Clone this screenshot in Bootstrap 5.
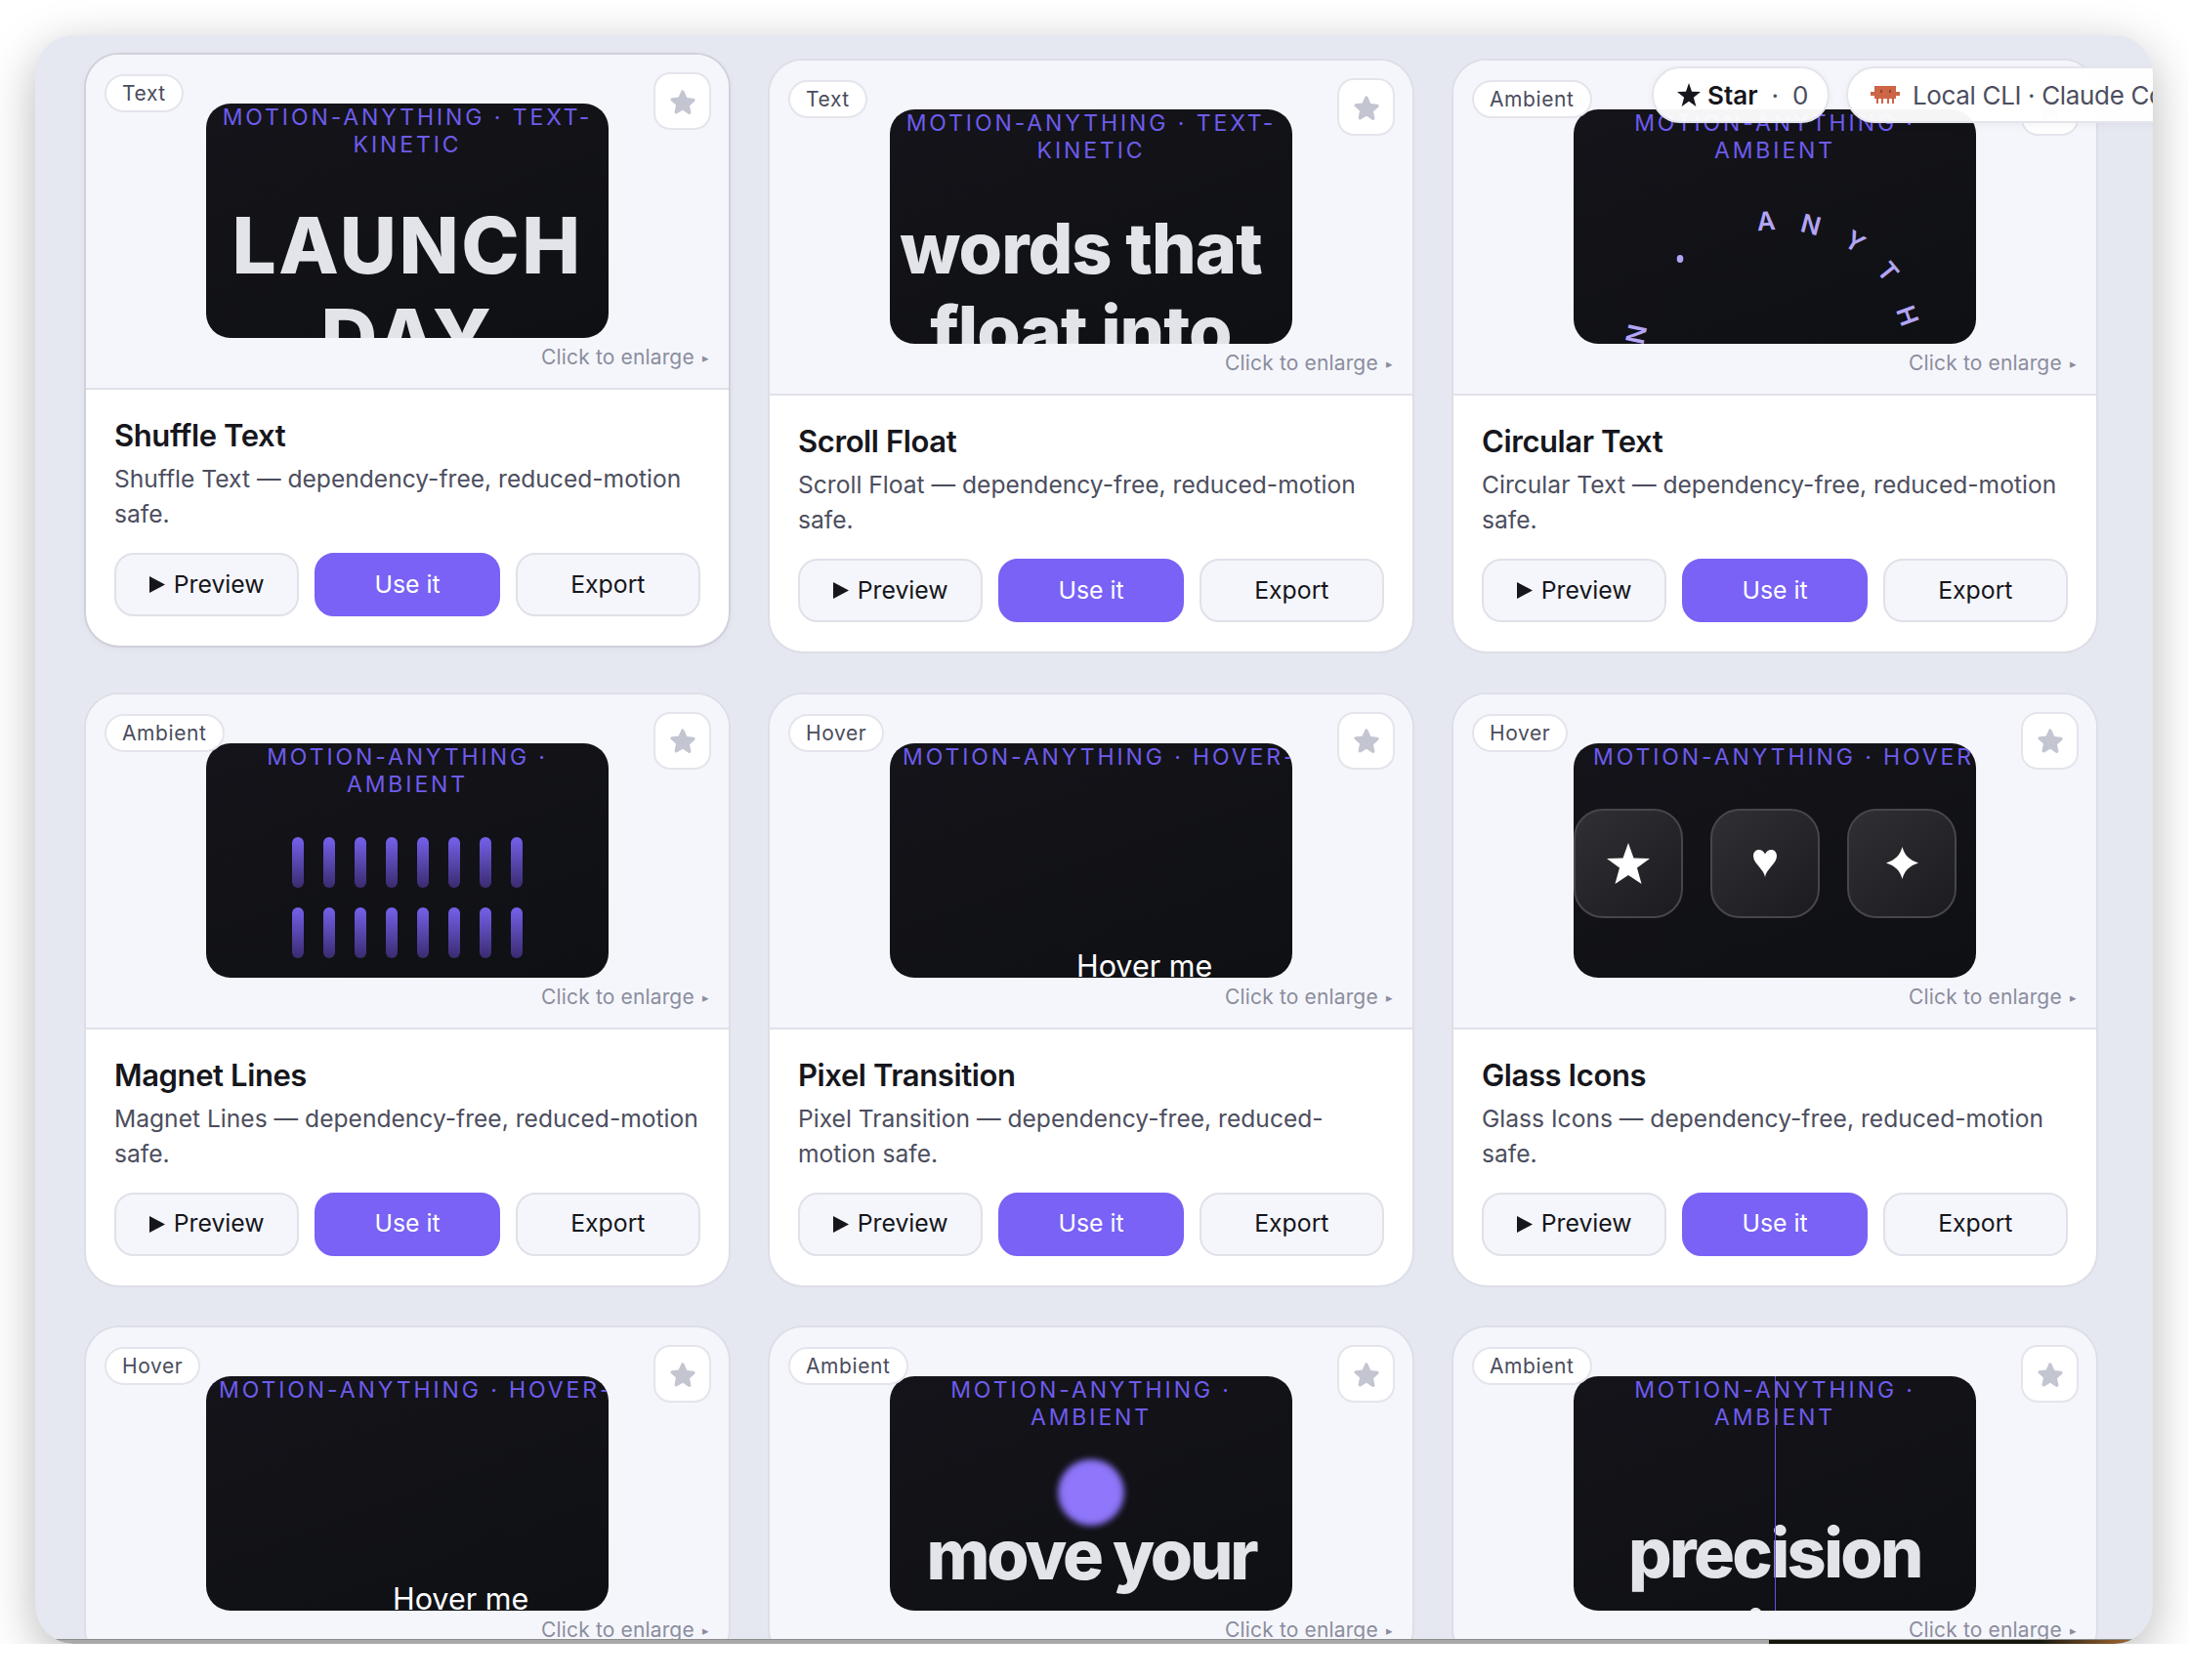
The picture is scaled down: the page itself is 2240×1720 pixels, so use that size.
<!DOCTYPE html>
<html lang="en">
  <head>
    <meta charset="UTF-8" />
    <meta name="viewport" content="width=device-width, initial-scale=1.0" />
    <title>Motion Anything</title>
    <link
      rel="stylesheet"
      href="https://cdn.jsdelivr.net/npm/bootstrap@5.3.3/dist/css/bootstrap.min.css"
    />
    <style>
      body { background: #fff; font-family: Inter, "Liberation Sans", sans-serif; }
      .app-window { position: relative; width: 2168px; height: 1647px; margin: 36px 0 0 36px; background: #e6e8f1; border-radius: 40px; overflow: hidden; box-shadow: 0 14px 50px rgba(0, 0, 0, .28); }
      .effect-grid { display: grid; grid-template-columns: repeat(3, 662px); gap: 39.500px 38px; padding: 24px 0 0 50px; }
      .effect-card { position: relative; border: 2px solid #dddee7; border-radius: 36px; background: #fff; overflow: hidden; }
      .effect-card.is-hovered { transform: translateY(-6px); border-color: #cfd0da; box-shadow: 0 2px 6px rgba(40, 40, 70, .04); }
      .effect-top { background: #f5f6fb; border-bottom: 2px solid #e0e1e9; padding: 50px 0 17px; }
      .kind-tag { position: absolute; top: 20px; left: 19px; z-index: 2; padding: 0 16px; line-height: 35px; font-size: 21px; letter-spacing: .6px; color: #4a4c5c; background: #fff; border: 2px solid #e4e5ec; border-radius: 20px; }
      .fav-btn { position: absolute; top: 18px; right: 18px; z-index: 2; width: 59px; height: 59px; padding: 0; display: flex; align-items: center; justify-content: center; background: #fff; border: 2px solid #e4e5ec; border-radius: 17px; }
      .fav-btn svg { width: 28px; height: 28px; fill: #c3c5d1; }
      .stage { position: relative; width: 412px; height: 240px; margin: 0 auto; border-radius: 25px; overflow: hidden; background: linear-gradient(160deg, #14141a, #0f1014); }
      .eyebrow { font-size: 23px; line-height: 28px; letter-spacing: 2.900px; color: #6e5cec; text-align: center; padding: 0 4px; }
      .eyebrow-line { white-space: nowrap; text-align: left; padding: 0 0 0 13px; }
      .eyebrow-glass { padding-left: 20px; }
      .big-text { color: #e3e4ea; font-weight: 800; text-align: center; white-space: nowrap; }
      .launch-text { margin-top: 42px; font-size: 80px; line-height: 94px; letter-spacing: 2.500px; }
      .float-text { margin-top: 43px; padding-right: 21px; font-size: 72px; line-height: 85px; letter-spacing: -1px; }
      .ambient-text { margin-top: -13px; font-size: 70px; line-height: 85px; letter-spacing: -2.600px; }
      .move-text { letter-spacing: -3.200px; }
      .precision-text { margin-top: 82px; }
      .circle-svg { position: absolute; inset: 0; }
      .circle-svg text { font: 600 26px Inter, sans-serif; fill: #b3a5f5; text-anchor: middle; dominant-baseline: central; }
      .circle-svg ellipse { fill: #b3a5f5; }
      .magnet-grid { display: grid; grid-template-columns: repeat(8, 12px); grid-auto-rows: 52px; gap: 20px; justify-content: center; margin-top: 40px; }
      .magnet-bar { border-radius: 6px; background: linear-gradient(#7561eb, #3a2b6f); }
      .hover-label { position: absolute; left: 191px; top: 208px; font-size: 30.500px; line-height: 40px; color: #fff; }
      .glass-row { display: flex; gap: 28px; margin-top: 39px; }
      .glass-tile { width: 112px; height: 112px; display: flex; align-items: center; justify-content: center; border: 2px solid #47474b; border-radius: 30px; background: linear-gradient(140deg, #303034, #1c1c20); }
      .glass-tile svg { fill: #fff; }
      .orb { width: 68px; height: 68px; margin: 29px auto 0; border-radius: 50%; background: radial-gradient(circle, #8f76fa 55%, #7a62ea); filter: blur(3px); }
      .scan-line { position: absolute; left: 206px; top: 0; width: 1px; height: 100%; background: #6553dc; }
      .effect-hint { margin-top: 6px; padding-right: 20px; text-align: right; font-size: 21px; line-height: 28px; letter-spacing: .15px; color: #8b8d9e; }
      .effect-hint span { font-size: 13px; vertical-align: 2px; margin-left: 2px; }
      .effect-body { padding: 27px 29px 30px; }
      .effect-title { margin: 0 0 6px; font-size: 31px; line-height: 40px; font-weight: 600; color: #16161c; letter-spacing: -.4px; }
      .effect-text { margin: 0 0 22px; font-size: 24.600px; line-height: 36px; color: #4c4e5e; }
      .action-row { display: grid; grid-template-columns: repeat(3, 1fr); gap: 16px; }
      .action-btn { height: 65px; padding: 0; font-size: 24.800px; color: #16161c; background: #f5f6fb; border: 2px solid #e0e1e9; border-radius: 20px; display: flex; align-items: center; justify-content: center; gap: 9px; }
      .action-btn svg { width: 16px; height: 17px; fill: #16161c; }
      .action-primary { color: #fff; background: #7962f5; border-color: #7962f5; }
      .float-pill { position: absolute; top: 32px; z-index: 3; height: 58px; display: flex; align-items: center; white-space: nowrap; background: rgba(255, 255, 255, .96); border: 2px solid #e4e5ec; border-radius: 29px; font-size: 26px; box-shadow: 0 2px 8px rgba(30, 30, 60, .05); }
      .star-pill { left: 1655px; width: 182px; padding-left: 24px; color: #16161c; }
      .star-pill b { font-weight: 600; margin-left: 7px; }
      .star-pill svg { width: 24px; height: 24px; fill: #16161c; }
      .star-pill i { font-style: normal; color: #4c4e60; margin-left: 14px; }
      .cli-pill { left: 1854px; width: 400px; padding-left: 23px; color: #4c4e60; gap: 13px; letter-spacing: -.35px; }
      .bottom-strip { position: absolute; left: 0; right: 0; bottom: 0; height: 5px; z-index: 4; display: flex; border-top: 1px solid #8d8d8d; background: #a9a9a9; }
      .bottom-strip div { margin-left: auto; width: 393px; background: linear-gradient(90deg, #15170f 70%, #8a5a2c 90%, #a5703a); }
    </style>
  </head>
  <body>
    <svg width="0" height="0" class="d-block">
      <symbol id="soft-star" viewBox="0 0 24 24"><path d="M12 2.200c.6 0 1 .3 1.300 1l2.400 5.400 5.800.6c1.400.2 1.800 1.600.8 2.500l-4.300 3.900 1.200 5.700c.3 1.400-1 2.300-2.200 1.600L12 19.500l-5 2.900c-1.200.7-2.500-.2-2.200-1.600L6 15.100 1.700 11.200c-1-.9-.6-2.300.8-2.500l5.800-.6 2.400-5.400c.3-.7.7-1 1.300-1z" /></symbol>
      <symbol id="play" viewBox="0 0 16 17"><path d="M0 0l16 8.500L0 17z" /></symbol>
    </svg>

    <div class="app-window">
      <div class="float-pill star-pill">
        <svg viewBox="0 0 24 24"><path d="M12 0l3 8.700 9 .4-7.100 5.600L19.400 24 12 18.700 4.600 24l2.500-9.300L0 9.100l9-.4z" /></svg>
        <b>Star</b><i>·</i><i>0</i>
      </div>
      <div class="float-pill cli-pill">
        <svg width="30" height="18" viewBox="0 0 30 18">
          <path fill="#cd6547" d="M4 0h22v6h4v4h-4v3h-2v5h-2v-5h-3v5h-2v-5h-4v5H11v-5H8v5H6v-5H4v-3H0V6h4z" />
          <path fill="#8e4230" d="M10 4h2v3h-2zM19 4h2v3h-2z" />
        </svg>
        Local CLI · Claude Code
      </div>

      <div class="effect-grid">
        <div class="card effect-card is-hovered">
          <div class="effect-top">
            <span class="kind-tag">Text</span>
            <button class="fav-btn"><svg><use href="#soft-star" /></svg></button>
            <div class="stage">
              <div class="eyebrow">MOTION-ANYTHING · TEXT-KINETIC</div>
              <div class="big-text launch-text">LAUNCH<br />DAY</div>
            </div>
            <div class="effect-hint">Click to enlarge <span>▸</span></div>
          </div>
          <div class="effect-body">
            <h5 class="effect-title">Shuffle Text</h5>
            <p class="effect-text">Shuffle Text — dependency-free, reduced-motion safe.</p>
            <div class="action-row">
              <button class="btn action-btn"><svg><use href="#play" /></svg>Preview</button>
              <button class="btn action-btn action-primary">Use it</button>
              <button class="btn action-btn">Export</button>
            </div>
          </div>
        </div>

        <div class="card effect-card">
          <div class="effect-top">
            <span class="kind-tag">Text</span>
            <button class="fav-btn"><svg><use href="#soft-star" /></svg></button>
            <div class="stage">
              <div class="eyebrow">MOTION-ANYTHING · TEXT-KINETIC</div>
              <div class="big-text float-text">words that<br />float into</div>
            </div>
            <div class="effect-hint">Click to enlarge <span>▸</span></div>
          </div>
          <div class="effect-body">
            <h5 class="effect-title">Scroll Float</h5>
            <p class="effect-text">Scroll Float — dependency-free, reduced-motion safe.</p>
            <div class="action-row">
              <button class="btn action-btn"><svg><use href="#play" /></svg>Preview</button>
              <button class="btn action-btn action-primary">Use it</button>
              <button class="btn action-btn">Export</button>
            </div>
          </div>
        </div>

        <div class="card effect-card">
          <div class="effect-top">
            <span class="kind-tag">Ambient</span>
            <button class="fav-btn"><svg><use href="#soft-star" /></svg></button>
            <div class="stage">
              <div class="eyebrow">MOTION-ANYTHING · AMBIENT</div>
              <svg class="circle-svg" width="412" height="240">
                <text transform="translate(197 114) rotate(-4)">A</text>
                <text transform="translate(243 118) rotate(15)">N</text>
                <text transform="translate(288 135) rotate(33)">Y</text>
                <text transform="translate(322 166) rotate(51)">T</text>
                <text transform="translate(342 211) rotate(70)">H</text>
                <text transform="translate(64 230) rotate(-78)">N</text>
                <ellipse cx="109" cy="153" rx="3.300" ry="4" />
              </svg>
            </div>
            <div class="effect-hint">Click to enlarge <span>▸</span></div>
          </div>
          <div class="effect-body">
            <h5 class="effect-title">Circular Text</h5>
            <p class="effect-text">Circular Text — dependency-free, reduced-motion safe.</p>
            <div class="action-row">
              <button class="btn action-btn"><svg><use href="#play" /></svg>Preview</button>
              <button class="btn action-btn action-primary">Use it</button>
              <button class="btn action-btn">Export</button>
            </div>
          </div>
        </div>

        <div class="card effect-card">
          <div class="effect-top">
            <span class="kind-tag">Ambient</span>
            <button class="fav-btn"><svg><use href="#soft-star" /></svg></button>
            <div class="stage">
              <div class="eyebrow">MOTION-ANYTHING · AMBIENT</div>
              <div class="magnet-grid">
                <div class="magnet-bar"></div><div class="magnet-bar"></div><div class="magnet-bar"></div><div class="magnet-bar"></div>
                <div class="magnet-bar"></div><div class="magnet-bar"></div><div class="magnet-bar"></div><div class="magnet-bar"></div>
                <div class="magnet-bar"></div><div class="magnet-bar"></div><div class="magnet-bar"></div><div class="magnet-bar"></div>
                <div class="magnet-bar"></div><div class="magnet-bar"></div><div class="magnet-bar"></div><div class="magnet-bar"></div>
              </div>
            </div>
            <div class="effect-hint">Click to enlarge <span>▸</span></div>
          </div>
          <div class="effect-body">
            <h5 class="effect-title">Magnet Lines</h5>
            <p class="effect-text">Magnet Lines — dependency-free, reduced-motion safe.</p>
            <div class="action-row">
              <button class="btn action-btn"><svg><use href="#play" /></svg>Preview</button>
              <button class="btn action-btn action-primary">Use it</button>
              <button class="btn action-btn">Export</button>
            </div>
          </div>
        </div>

        <div class="card effect-card">
          <div class="effect-top">
            <span class="kind-tag">Hover</span>
            <button class="fav-btn"><svg><use href="#soft-star" /></svg></button>
            <div class="stage">
              <div class="eyebrow eyebrow-line">MOTION-ANYTHING · HOVER-</div>
              <div class="hover-label">Hover me</div>
            </div>
            <div class="effect-hint">Click to enlarge <span>▸</span></div>
          </div>
          <div class="effect-body">
            <h5 class="effect-title">Pixel Transition</h5>
            <p class="effect-text">Pixel Transition — dependency-free, reduced-motion safe.</p>
            <div class="action-row">
              <button class="btn action-btn"><svg><use href="#play" /></svg>Preview</button>
              <button class="btn action-btn action-primary">Use it</button>
              <button class="btn action-btn">Export</button>
            </div>
          </div>
        </div>

        <div class="card effect-card">
          <div class="effect-top">
            <span class="kind-tag">Hover</span>
            <button class="fav-btn"><svg><use href="#soft-star" /></svg></button>
            <div class="stage">
              <div class="eyebrow eyebrow-line eyebrow-glass">MOTION-ANYTHING · HOVER-</div>
              <div class="glass-row">
                <div class="glass-tile"><svg width="44" height="42" viewBox="0 0 24 24" preserveAspectRatio="none"><path d="M12 0l3 8.800 9 .3-7.100 5.500L19.400 24 12 18.800 4.600 24l2.500-9.400L0 9.100l9-.3z" /></svg></div>
                <div class="glass-tile"><svg width="24" height="28" viewBox="0 0 24 28"><path d="M12 28C11 20 0 14 0 6.500 0 2.500 2.500 0 5.500 0 8.500 0 11 2 12 4.500 13 2 15.500 0 18.500 0 21.500 0 24 2.500 24 6.500 24 14 13 20 12 28z" /></svg></div>
                <div class="glass-tile"><svg width="33" height="33" viewBox="0 0 33 33"><path d="M16.500 0C19 9 24 13.500 33 16.500 24 19.500 19 24 16.500 33 14 24 9 19.500 0 16.500 9 13.500 14 9 16.500 0z" /></svg></div>
              </div>
            </div>
            <div class="effect-hint">Click to enlarge <span>▸</span></div>
          </div>
          <div class="effect-body">
            <h5 class="effect-title">Glass Icons</h5>
            <p class="effect-text">Glass Icons — dependency-free, reduced-motion safe.</p>
            <div class="action-row">
              <button class="btn action-btn"><svg><use href="#play" /></svg>Preview</button>
              <button class="btn action-btn action-primary">Use it</button>
              <button class="btn action-btn">Export</button>
            </div>
          </div>
        </div>

        <div class="card effect-card">
          <div class="effect-top">
            <span class="kind-tag">Hover</span>
            <button class="fav-btn"><svg><use href="#soft-star" /></svg></button>
            <div class="stage">
              <div class="eyebrow eyebrow-line">MOTION-ANYTHING · HOVER-</div>
              <div class="hover-label">Hover me</div>
            </div>
            <div class="effect-hint">Click to enlarge <span>▸</span></div>
          </div>
        </div>

        <div class="card effect-card">
          <div class="effect-top">
            <span class="kind-tag">Ambient</span>
            <button class="fav-btn"><svg><use href="#soft-star" /></svg></button>
            <div class="stage">
              <div class="eyebrow">MOTION-ANYTHING · AMBIENT</div>
              <div class="orb"></div>
              <div class="big-text ambient-text move-text">move your<br />mouse</div>
            </div>
            <div class="effect-hint">Click to enlarge <span>▸</span></div>
          </div>
        </div>

        <div class="card effect-card">
          <div class="effect-top">
            <span class="kind-tag">Ambient</span>
            <button class="fav-btn"><svg><use href="#soft-star" /></svg></button>
            <div class="stage">
              <div class="eyebrow">MOTION-ANYTHING · AMBIENT</div>
              <div class="big-text ambient-text precision-text">precision<br />in</div>
              <div class="scan-line"></div>
            </div>
            <div class="effect-hint">Click to enlarge <span>▸</span></div>
          </div>
        </div>
      </div>
      <div class="bottom-strip"><div></div></div>
    </div>
    <script src="https://cdn.jsdelivr.net/npm/bootstrap@5.3.3/dist/js/bootstrap.bundle.min.js"></script>
  </body>
</html>
